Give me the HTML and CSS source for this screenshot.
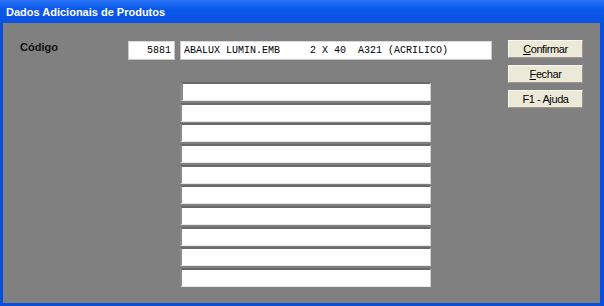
FILE: index.html
```html
<!DOCTYPE html>
<html lang="pt">
  <head>
    <meta charset="utf-8" />
    <title>Dados Adicionais de Produtos</title>
    <link rel="stylesheet" href="styles.css">
  </head>
  <body>
    <div class="window">
      <div class="titlebar">Dados Adicionais de Produtos</div>
      <div class="client">
        <div class="main">
          <div class="top-row">
            <span class="label">Código</span>
            <input class="field field-code" type="text" value="5881" />
            <input
              class="field field-desc"
              type="text"
              value="ABALUX LUMIN.EMB     2 X 40  A321 (ACRILICO)"
            />
          </div>
          <div class="rows">
            <input class="row-input row-active" type="text" />
            <input class="row-input" type="text" />
            <input class="row-input" type="text" />
            <input class="row-input" type="text" />
            <input class="row-input" type="text" />
            <input class="row-input" type="text" />
            <input class="row-input" type="text" />
            <input class="row-input" type="text" />
            <input class="row-input" type="text" />
            <input class="row-input" type="text" />
          </div>
        </div>
        <div class="buttons">
          <button type="button" class="button"><u>C</u>onfirmar</button>
          <button type="button" class="button"><u>F</u>echar</button>
          <button type="button" class="button">F1 - Ajuda</button>
        </div>
      </div>
    </div>
  </body>
</html>
```

FILE: styles.css
```css
html,
body {
  margin: 0;
  padding: 0;
  background-color: #808080;
}
.window {
  width: 604px;
  height: 306px;
  box-sizing: border-box;
  display: flex;
  flex-direction: column;
  background-color: #0a4fd8;
  padding: 0 4px 3px 3px;
}
.titlebar {
  height: 23px;
  margin: 0 -4px 0 -3px;
  padding-left: 6px;
  box-sizing: border-box;
  background: linear-gradient(#2a74f8, #0a58ea 40%, #0a52e0);
  color: white;
  font-family: "Liberation Sans", Arial, sans-serif;
  font-weight: bold;
  font-size: 11px;
  line-height: 24px;
}
.client {
  flex: 1;
  background-color: #808080;
  display: flex;
  padding: 17px 17px 0 17px;
}
.main {
  flex: 1;
  margin-top: 1px;
}
.top-row {
  display: flex;
  align-items: flex-start;
}
.label {
  width: 108px;
  font-family: "Liberation Sans", Arial, sans-serif;
  font-weight: bold;
  font-size: 11px;
  color: #101010;
  line-height: 12px;
}
.field {
  height: 19px;
  box-sizing: border-box;
  border: 1px solid #c8c8c8;
  border-top-color: #d8d8d8;
  background-color: white;
  font-family: "Liberation Mono", "Courier New", monospace;
  font-size: 10px;
  color: black;
  padding: 0 3px;
  margin: 0;
  outline: none;
}
.field-code {
  width: 47px;
  text-align: right;
}
.field-desc {
  width: 312px;
  margin-left: 5px;
}
.rows {
  display: flex;
  flex-direction: column;
  gap: 1.67px;
  margin-left: 160px;
  margin-top: 22px;
}
.row-input {
  width: 251px;
  height: 19px;
  box-sizing: border-box;
  margin: 0;
  padding: 0 2px;
  background-color: white;
  border-style: solid;
  border-width: 2px 1px 1px 2px;
  border-color: #6a6a6a #d4d0c8 #e8e8e8 #8a8a8a;
  outline: none;
}
.row-active {
  border-left: 3px solid #8a8a8a;
}
.buttons {
  display: flex;
  flex-direction: column;
  gap: 7px;
  width: 76px;
  margin-left: 16px;
}
.button {
  height: 18px;
  box-sizing: border-box;
  margin: 0;
  padding: 0;
  background-color: #ece9d8;
  border: 1px solid #f8f8f4;
  border-right-color: #9a9890;
  border-bottom-color: #9a9890;
  font-family: "Liberation Sans", Arial, sans-serif;
  font-size: 11px;
  color: black;
  letter-spacing: -0.4px;
  cursor: pointer;
}
```
